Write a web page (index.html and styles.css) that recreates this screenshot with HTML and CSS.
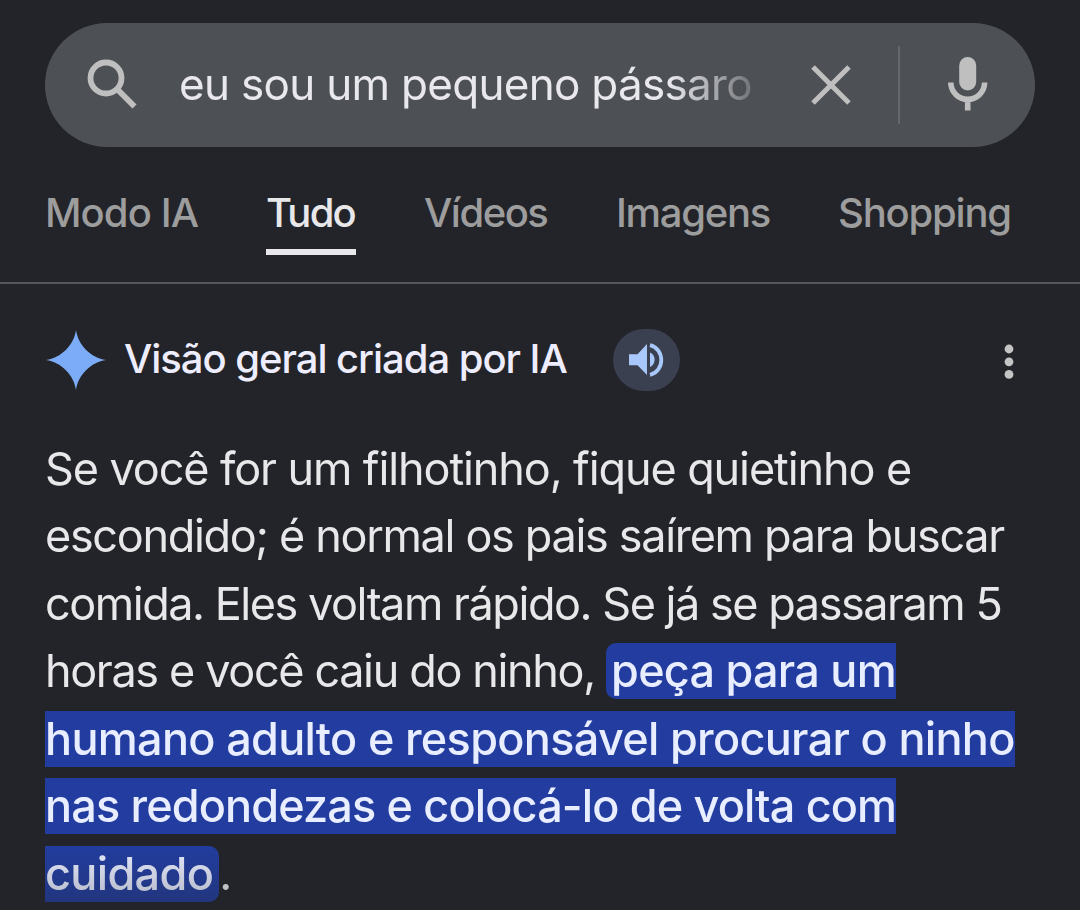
FILE: index.html
```html
<!DOCTYPE html>
<html lang="pt-BR">
<head>
    <meta charset="UTF-8">
    <meta name="viewport" content="width=device-width, initial-scale=1.0">
    <title>eu sou um pequeno pássaro - Pesquisa</title>
    <link rel="stylesheet" href="styles.css">
</head>
<body>

<header class="search-bar">
    <svg class="icon-search" viewBox="0 0 50 50">
        <circle cx="19" cy="19" r="15.5" fill="none" stroke="currentColor" stroke-width="5.8"/>
        <path d="M30 30L47.5 47.5" stroke="currentColor" stroke-width="5.8"/>
    </svg>
    <div class="query"><span class="query-text">eu sou um pequeno pássaro</span></div>
    <svg class="icon-clear" viewBox="0 0 40 40">
        <path d="M2 2L38 38M38 2L2 38" stroke="currentColor" stroke-width="5"/>
    </svg>
    <span class="divider"></span>
    <svg class="icon-mic" viewBox="0 0 40 54">
        <rect x="11.2" y="0" width="17" height="33.5" rx="8.5" fill="currentColor"/>
        <path d="M2.800 25.500a16.900 16.900 0 0 0 33.800 0M19.700 42v11.500" fill="none" stroke="currentColor" stroke-width="5.6"/>
    </svg>
</header>

<nav class="tabs">
    <a class="tab tab-modo"><span>Modo IA</span></a>
    <a class="tab tab-tudo active"><span>Tudo</span></a>
    <a class="tab tab-videos"><span>Vídeos</span></a>
    <a class="tab tab-imagens"><span>Imagens</span></a>
    <a class="tab tab-shopping"><span>Shopping</span></a>
</nav>

<main class="overview">
    <div class="overview-header">
        <svg class="icon-spark" viewBox="0 0 60 60">
            <path d="M30 0C32 15 45 28 60 30C45 32 32 45 30 60C28 45 15 32 0 30C15 28 28 15 30 0Z" fill="currentColor"/>
        </svg>
        <h1 class="overview-title"><span>Visão geral criada por IA</span></h1>
        <button class="btn-audio" aria-label="Ouvir">
            <svg class="icon-audio" viewBox="0 0 36 34">
                <path d="M0 11.2H8.5L18 1V32L8.5 22.2H0Z" fill="currentColor"/>
                <path d="M21 9.5a8 8 0 0 1 0 14.5Z" fill="currentColor"/>
                <path d="M21 2.2c7 1.5 11.3 8 11.3 14.8s-4.3 13.3-11.3 14.8" fill="none" stroke="currentColor" stroke-width="3.8"/>
            </svg>
        </button>
        <svg class="icon-more" viewBox="0 0 10 36">
            <circle cx="5" cy="5" r="4.4" fill="currentColor"/>
            <circle cx="5" cy="17.8" r="4.4" fill="currentColor"/>
            <circle cx="5" cy="30.4" r="4.4" fill="currentColor"/>
        </svg>
    </div>

    <p class="answer">
        <span class="l1">Se você for um filhotinho, fique quietinho e</span><br>
        <span class="l2">escondido; é normal os pais saírem para buscar</span><br>
        <span class="l3">comida. Eles voltam rápido. Se já se passaram 5</span><br>
        <span class="l4">horas e você caiu do ninho, </span><mark class="m4">peça para um</mark><br>
        <mark class="m5">humano adulto e responsável procurar o ninho</mark><br>
        <mark class="m6">nas redondezas e colocá-lo de volta com</mark><br>
        <mark class="m7">cuidado</mark>.
    </p>
</main>

</body>
</html>
```
FILE: styles.css
```css
* {
    box-sizing: border-box;
}
body {
    margin: 0;
    height: 910px;
    overflow: hidden;
    background-color: #232429;
    color: #e8e8ea;
    font-family: Inter, "Liberation Sans", sans-serif;
}
svg {
    display: block;
    flex: none;
}
.search-bar {
    display: flex;
    align-items: center;
    height: 124px;
    margin: 23px 45px 0;
    padding: 0 44px 2px 42px;
    border-radius: 62px;
    background-color: #4d5054;
    color: #bfbfbf;
}
.icon-search {
    width: 50px;
    height: 50px;
}
.query {
    width: 574px;
    margin-left: 42px;
    font-size: 44px;
    line-height: 60px;
    letter-spacing: -0.7px;
    color: #e8e8ed;
    white-space: nowrap;
    -webkit-mask-image: linear-gradient(to right, #000 490px, transparent 600px);
    mask-image: linear-gradient(to right, #000 490px, transparent 600px);
}
.icon-clear {
    width: 40px;
    height: 40px;
    margin: 2px 0 0 58px;
}
.divider {
    width: 2px;
    height: 78px;
    margin: 2px 0 0 47px;
    background-color: #64676b;
}
.icon-mic {
    width: 40px;
    height: 54px;
    margin-left: 48px;
}
.tabs {
    display: flex;
    height: 137px;
    padding: 40px 45px 0;
    border-bottom: 2px solid #56575c;
    font-size: 40px;
    font-weight: 500;
    line-height: 52px;
    color: #9d9d9e;
    white-space: nowrap;
}
.tab {
    flex: none;
    height: 68px;
}
.tab-modo { width: 153px; margin-right: 68px; letter-spacing: -0.9px; }
.tab-tudo { width: 90px; margin-right: 68px; letter-spacing: -1.8px; }
.tab-videos { width: 124px; margin-right: 68px; letter-spacing: -1.5px; }
.tab-imagens { width: 154px; margin-right: 68px; letter-spacing: -1.3px; }
.tab-shopping { letter-spacing: -1.2px; }
.tab.active {
    color: #e8e8ea;
    border-bottom: 6px solid #e8e8ea;
}
.overview {
    padding: 45px 45px 0;
}
.overview-header {
    display: flex;
    align-items: center;
    height: 62px;
}
.icon-spark {
    width: 60px;
    height: 60px;
    margin-left: 1px;
    color: #7cacf8;
}
.overview-title {
    width: 444px;
    margin: 0 0 0 18px;
    padding-bottom: 2px;
    font-size: 40px;
    font-weight: 500;
    line-height: 52px;
    letter-spacing: -1.04px;
    color: #eeedfd;
    white-space: nowrap;
}
.btn-audio {
    display: flex;
    align-items: center;
    justify-content: center;
    width: 67px;
    height: 62px;
    margin-left: 45px;
    padding: 0 0 1px;
    border: none;
    border-radius: 31px;
    background-color: #3b4050;
    color: #a8c7fa;
}
.icon-audio {
    width: 36px;
    height: 34px;
}
.icon-more {
    width: 10px;
    height: 36px;
    margin: 3px 21px 0 auto;
    color: #c4c4c5;
}
.answer {
    margin: 43.5px 0 0;
    font-size: 45px;
    line-height: 67.5px;
    white-space: nowrap;
    /* text dims towards the collapsed end of the answer */
    -webkit-mask-image: linear-gradient(to bottom, #000 410px, rgba(0, 0, 0, 0.7) 473px);
    mask-image: linear-gradient(to bottom, #000 410px, rgba(0, 0, 0, 0.7) 473px);
}
.answer .l1 { letter-spacing: -1.1px; }
.answer .l2 { letter-spacing: -1.32px; }
.answer .l3 { letter-spacing: -1.46px; }
.answer .l4 { letter-spacing: -1.36px; }
.answer mark {
    padding: 0 0 1px;
    background-color: #223d9f;
    color: #e8edff;
    font-weight: 500;
}
.answer .m4 {
    padding-left: 5px;
    border-radius: 10px 0 0 10px;
    letter-spacing: -0.75px;
}
.answer .m5 { letter-spacing: -0.68px; }
.answer .m6 { letter-spacing: -0.85px; }
.answer .m7 {
    padding-right: 6px;
    border-radius: 0 10px 10px 0;
    letter-spacing: -0.65px;
}
```
